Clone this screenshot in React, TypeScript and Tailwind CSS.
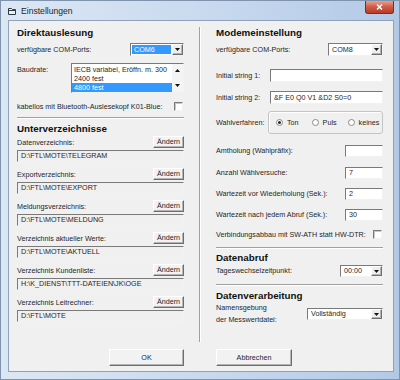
import React from "react";

const sunken =
  "border border-t-[#7a7a7a] border-l-[#7a7a7a] border-b-[#f2f2f2] border-r-[#f2f2f2]";
const raised =
  "border border-t-[#ffffff] border-l-[#ffffff] border-b-[#6e6e6e] border-r-[#6e6e6e] shadow-[inset_-1px_-1px_0_#b4b4b4]";

function Tri({ up = false }: { up?: boolean }) {
  return (
    <svg width="5" height="3" viewBox="0 0 5 3" className="block">
      {up ? <path d="M0 3h5L2.5 0z" fill="#111" /> : <path d="M0 0h5L2.5 3z" fill="#111" />}
    </svg>
  );
}

function Select({
  w,
  h,
  value,
  highlighted = false,
}: {
  w: string;
  h: string;
  value: string;
  highlighted?: boolean;
}) {
  return (
    <div className={`flex items-stretch bg-white ${sunken} ${w} ${h}`}>
      <div className="flex-1 flex items-stretch p-[1px]">
        {highlighted ? (
          <span className="flex-1 flex items-center bg-[#3399ff] text-white px-[2px]">{value}</span>
        ) : (
          <span className="flex-1 flex items-center px-[2px]">{value}</span>
        )}
      </div>
      <div className={`w-[11px] flex items-center justify-center bg-[#eeeeee] ${raised}`}>
        <Tri />
      </div>
    </div>
  );
}

function TextBox({ w, h, value = "", gray = false }: { w: string; h: string; value?: string; gray?: boolean }) {
  return (
    <div
      className={`flex items-center px-[3px] whitespace-nowrap overflow-hidden ${sunken} ${w} ${h} ${
        gray ? "bg-[#f0f0f0]" : "bg-white"
      }`}
    >
      {value}
    </div>
  );
}

function Check() {
  return <div className={`w-[9px] h-[9px] bg-white ${sunken} shadow-[inset_1px_1px_0_#c8c8c8]`} />;
}

function Radio({ checked = false }: { checked?: boolean }) {
  return (
    <span className="w-[7px] h-[7px] rounded-full bg-white border border-[#8a8a8a] flex items-center justify-center">
      {checked && <span className="w-[3px] h-[3px] rounded-full bg-[#222]" />}
    </span>
  );
}

function Hr({ mt }: { mt: string }) {
  return <div className={`${mt} h-[2px] border-t border-t-[#a0a0a0] border-b border-b-white`} />;
}

function Heading({ mt, children }: { mt: string; children: React.ReactNode }) {
  return <div className={`${mt} h-[12px] leading-[12px] text-[9.8px] font-bold text-[#111]`}>{children}</div>;
}

function Button({ w, h, children }: { w: string; h: string; children: React.ReactNode }) {
  return (
    <div className={`flex items-center justify-center bg-[#f2f2f2] ${raised} ${w} ${h}`}>{children}</div>
  );
}

function DirGroup({ mt, label, value }: { mt: string; label: string; value: string }) {
  return (
    <div className={mt}>
      <div className="h-[12px] flex items-end justify-between">
        <span className="leading-[10px]">{label}</span>
        <Button w="w-[31px]" h="h-[12px]">Ändern</Button>
      </div>
      <div className="mt-[2px]">
        <TextBox w="w-full" h="h-[12px]" value={value} gray />
      </div>
    </div>
  );
}

function LabeledInput({ mt, label, value = "", w = "w-[38px]" }: { mt: string; label: string; value?: string; w?: string }) {
  return (
    <div className={`${mt} h-[12px] flex items-center justify-between`}>
      <span>{label}</span>
      <TextBox w={w} h="h-[12px]" value={value} />
    </div>
  );
}

export default function App() {
  return (
    <div className="w-[400px] h-[380px] flex flex-col border border-[#7f93ad] bg-linear-to-r from-[#dce7f4] via-[#c9daef] to-[#b2c9e6] font-['Liberation_Sans',Arial,sans-serif] text-[7.2px] leading-[10px] text-[#1f1f1f] overflow-hidden">
      {/* Title bar */}
      <div className="h-[19px] flex items-start">
        <svg width="8" height="7" viewBox="0 0 8 7" className="ml-[7px] mt-[7px]">
          <path d="M0.5 0.5h3l1 1h3v5h-7z" fill="#e9eef5" stroke="#2f3a48" strokeWidth="1" />
          <path d="M0.5 2.5h7" stroke="#2f3a48" strokeWidth="1" />
        </svg>
        <span className="ml-[5px] mt-[5px] text-[8.6px] leading-[11px] text-[#1e1e1e]">Einstellungen</span>
        <div className="ml-auto mr-[5px] w-[29px] h-[13px] rounded-b-[3px] border border-t-0 border-[#7b2f24] bg-linear-to-b from-[#e6a092] via-[#cf5a45] to-[#b93a26] flex items-center justify-center">
          <svg width="7" height="6" viewBox="0 0 7 6">
            <path d="M1 0.5L6 5.5M6 0.5L1 5.5" stroke="#ffffff" strokeWidth="1.5" />
          </svg>
        </div>
      </div>

      {/* Client area */}
      <div className="ml-[7px] mr-[5px] mb-[7px] flex-1 bg-[#f0f0f0] border border-[#8fa2ba] flex flex-col">
        <div className="h-[322px] flex">
          {/* Left column */}
          <div className="ml-[8px] w-[167px] flex flex-col">
            <Heading mt="mt-[6px]">Direktauslesung</Heading>
            <div className="mt-[4px] h-[13px] flex items-center justify-between">
              <span>verfügbare COM-Ports:</span>
              <Select w="w-[54px]" h="h-[13px]" value="COM6" highlighted />
            </div>
            <div className="mt-[7px] flex items-start justify-between">
              <span className="pt-[2px]">Baudrate:</span>
              <div className={`w-[113px] h-[30px] bg-white flex ${sunken}`}>
                <div className="flex-1 pt-[1px]">
                  <div className="h-[9px] leading-[9px] pl-[2px] whitespace-nowrap">IECB variabel, Eröffn. m. 300</div>
                  <div className="h-[9px] leading-[9px] pl-[2px]">2400 fest</div>
                  <div className="h-[9px] leading-[9px] pl-[2px] bg-[#3399ff] text-white">4800 fest</div>
                </div>
                <div className="w-[11px] bg-[#f4f4f4] flex flex-col items-center justify-between py-[5px]">
                  <Tri up />
                  <Tri />
                </div>
              </div>
            </div>
            <div className="mt-[9px] h-[9px] flex items-center justify-between">
              <span className="whitespace-nowrap">kabellos mit Bluetooth-Auslesekopf K01-Blue:</span>
              <div className="mr-[1px]">
                <Check />
              </div>
            </div>
            <Hr mt="mt-[6px]" />
            <Heading mt="mt-[4px]">Unterverzeichnisse</Heading>
            <DirGroup mt="mt-[1px]" label="Datenverzeichnis:" value="D:\FTL\MOTE\TELEGRAM" />
            <DirGroup mt="mt-[6px]" label="Exportverzeichnis:" value="D:\FTL\MOTE\EXPORT" />
            <DirGroup mt="mt-[6px]" label="Meldungsverzeichnis:" value="D:\FTL\MOTE\MELDUNG" />
            <DirGroup mt="mt-[6px]" label="Verzeichnis aktueller Werte:" value="D:\FTL\MOTE\AKTUELL" />
            <DirGroup mt="mt-[6px]" label="Verzeichnis Kundenliste:" value="H:\K_DIENST\TTT-DATEIEN\JK\OGE" />
            <DirGroup mt="mt-[6px]" label="Verzeichnis Leitrechner:" value="D:\FTL\MOTE" />
          </div>

          {/* Divider */}
          <div className="ml-[15px] mt-[6px] mb-[1px] w-[2px] border-l border-l-[#a0a0a0] border-r border-r-white" />

          {/* Right column */}
          <div className="ml-[15px] w-[167px] flex flex-col">
            <Heading mt="mt-[6px]">Modemeinstellung</Heading>
            <div className="mt-[4px] h-[13px] flex items-center justify-between">
              <span>verfügbare COM-Ports:</span>
              <Select w="w-[55px]" h="h-[13px]" value="COM8" />
            </div>
            <div className="mt-[13px] h-[13px] flex items-center justify-between">
              <span>Initial string 1:</span>
              <TextBox w="w-[113px]" h="h-[13px]" />
            </div>
            <div className="mt-[9px] h-[13px] flex items-center justify-between">
              <span>Initial string 2:</span>
              <TextBox w="w-[113px]" h="h-[13px]" value="&F E0 Q0 V1 &D2 S0=0" />
            </div>
            <div className="mt-[7px] h-[23px] flex items-center justify-between">
              <span>Wahlverfahren:</span>
              <div className="w-[115px] h-full border border-[#c4c4c4] rounded-[3px] shadow-[inset_1px_1px_0_#ffffff] flex items-center pl-[7px]">
                <span className="flex items-center gap-[4px]">
                  <Radio checked />
                  Ton
                </span>
                <span className="ml-[13px] flex items-center gap-[4px]">
                  <Radio />
                  Puls
                </span>
                <span className="ml-[11px] flex items-center gap-[4px]">
                  <Radio />
                  keines
                </span>
              </div>
            </div>
            <LabeledInput mt="mt-[11px]" label="Amtholung (Wahlpräfix):" />
            <LabeledInput mt="mt-[10px]" label="Anzahl Wählversuche:" value="7" />
            <LabeledInput mt="mt-[9px]" label="Wartezeit vor Wiederholung (Sek.):" value="2" />
            <LabeledInput mt="mt-[9px]" label="Wartezeit nach jedem Abruf (Sek.):" value="30" />
            <div className="mt-[9px] h-[9px] flex items-center justify-between">
              <span className="whitespace-nowrap">Verbindungsabbau mit SW-ATH statt HW-DTR:</span>
              <div className="mr-[1px]">
                <Check />
              </div>
            </div>
            <Hr mt="mt-[8px]" />
            <Heading mt="mt-[3px]">Datenabruf</Heading>
            <div className="mt-[1px] h-[12px] flex items-center justify-between">
              <span>Tageswechselzeitpunkt:</span>
              <Select w="w-[43px]" h="h-[12px]" value="00:00" />
            </div>
            <Hr mt="mt-[7px]" />
            <Heading mt="mt-[4px]">Datenverarbeitung</Heading>
            <div className="flex items-start justify-between">
              <div className="leading-[12px]">
                <div>Namensgebung</div>
                <div>der Messwertdatei:</div>
              </div>
              <div className="mt-[6px]">
                <Select w="w-[76px]" h="h-[12px]" value="Vollständig" />
              </div>
            </div>
          </div>
        </div>

        {/* Buttons */}
        <div className="mt-[6px] h-[17px] flex">
          <div className="ml-[8px] w-[167px] flex justify-end">
            <Button w="w-[75px]" h="h-[17px]">OK</Button>
          </div>
          <div className="ml-[32px] w-[167px] flex">
            <Button w="w-[76px]" h="h-[17px]">Abbrechen</Button>
          </div>
        </div>
      </div>
    </div>
  );
}
